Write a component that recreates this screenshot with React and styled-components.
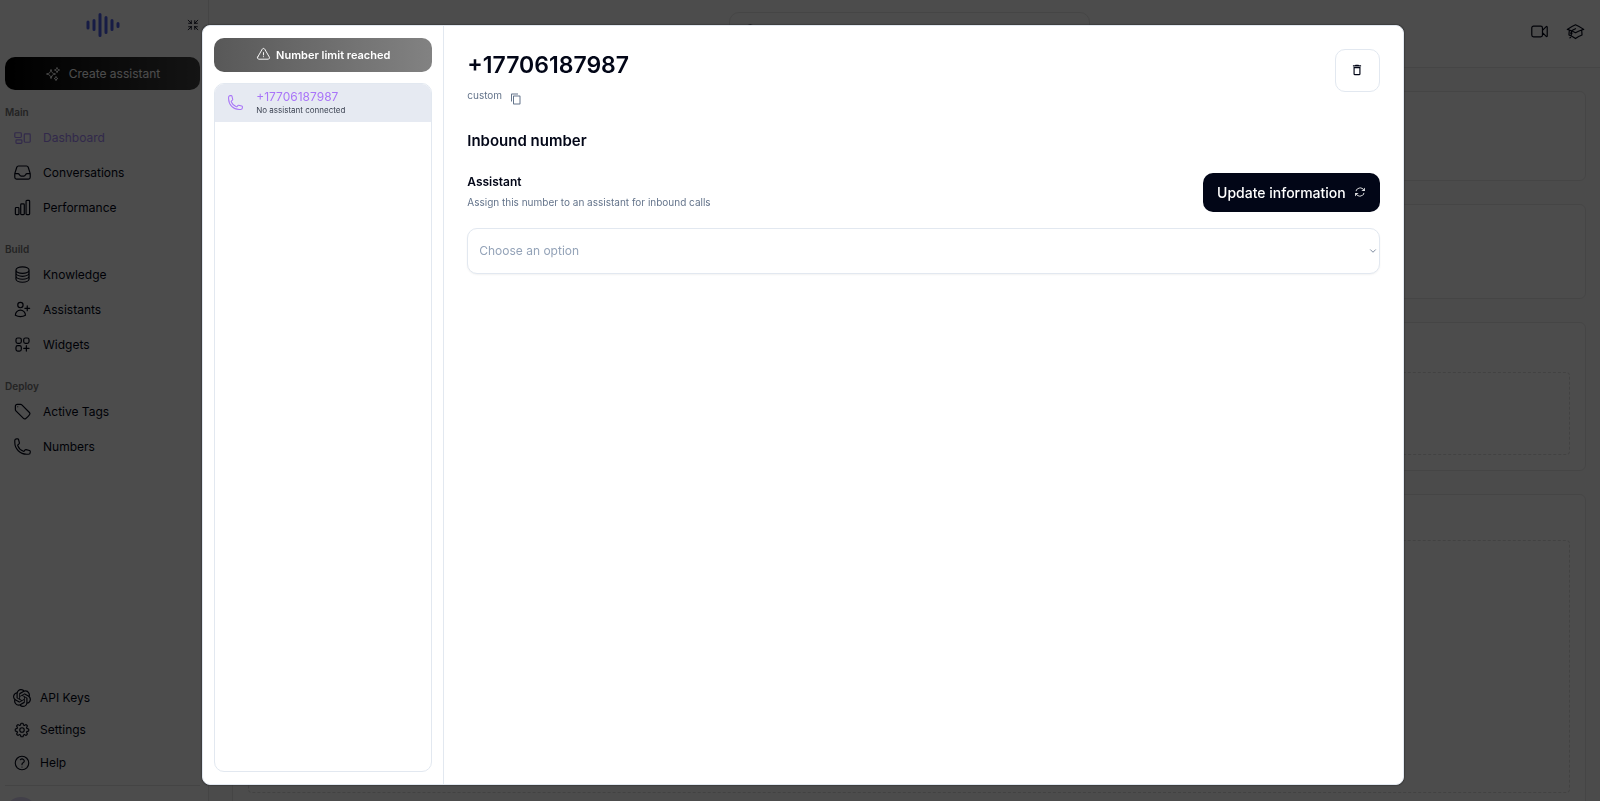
import styled, { createGlobalStyle } from "styled-components";
import {
    HiArrowPath,
    HiOutlineAcademicCap,
    HiOutlineArrowsPointingIn,
    HiOutlineChartBar,
    HiOutlineCircleStack,
    HiOutlineCog8Tooth,
    HiOutlineExclamationTriangle,
    HiOutlineInbox,
    HiOutlinePhone,
    HiOutlineQuestionMarkCircle,
    HiOutlineRectangleGroup,
    HiOutlineSparkles,
    HiOutlineSquaresPlus,
    HiOutlineTag,
    HiOutlineUserPlus,
    HiOutlineVideoCamera,
} from "react-icons/hi2";
import { MdContentCopy, MdDeleteOutline } from "react-icons/md";
import { SiOpenai } from "react-icons/si";
import { LuChevronDown, LuSearch } from "react-icons/lu";

const GlobalStyle = createGlobalStyle`
    * {
        box-sizing: border-box;
    }
    body {
        margin: 0;
        font-family: Inter, "Liberation Sans", sans-serif;
        font-size: 12px;
        line-height: 16px;
        color: #020617;
        background: #fafafa;
    }
    h2, h3, p {
        margin: 0;
    }
    button, input, select {
        font-family: inherit;
        margin: 0;
    }
    svg {
        display: block;
        flex-shrink: 0;
    }
`;
const Page = styled.div`
    display: flex;
    height: 100vh;
    overflow: hidden;
`;
const Sidebar = styled.aside`
    display: flex;
    flex-direction: column;
    flex-shrink: 0;
    width: 209px;
    padding: 0 8px 0 5px;
    border-right: 1px solid #e8e8e8;
    background: #fdfdfd;
`;
const SidebarTop = styled.div`
    display: grid;
    grid-template-columns: 1fr auto 1fr;
    align-items: center;
    height: 49px;
    margin-bottom: 8px;
`;
const CollapseButton = styled.button`
    grid-column: 3;
    justify-self: end;
    padding: 0;
    border: 0;
    background: none;
    color: #020617;
`;
const CreateButton = styled.button`
    display: flex;
    align-items: center;
    justify-content: center;
    gap: 8px;
    flex-shrink: 0;
    height: 33px;
    margin-bottom: 14px;
    border: 0;
    border-radius: 10px;
    background: linear-gradient(90deg, #000, #444);
    color: #fff;
    font-size: 12px;
    font-weight: 400;
`;
const NavSection = styled.section`
    display: flex;
    flex-direction: column;
    margin-bottom: 16px;
`;
const NavLabel = styled.p`
    font-size: 10px;
    font-weight: 600;
    color: #777;
`;
const NavLink = styled.a`
    display: flex;
    align-items: center;
    gap: ${({ $compact }) => ($compact ? "9px" : "11px")};
    height: ${({ $compact }) => ($compact ? "33px" : "35px")};
    padding-left: 8px;
    font-size: 12px;
    font-weight: 400;
    color: ${({ $active }) => ($active ? "#a78bfa" : "#020617")};
    text-decoration: none;
`;
const SidebarBottom = styled.div`
    display: flex;
    flex-direction: column;
    height: 119px;
    margin-top: auto;
`;
const Account = styled.div`
    flex-shrink: 0;
    height: 16px;
    margin-top: 6px;
    padding-top: 11px;
    border-top: 1px solid #e5e5e5;
    overflow: hidden;
`;
const Avatar = styled.div`
    width: 32px;
    height: 32px;
    border-radius: 50%;
    background: #ddd6f3;
`;
const Main = styled.main`
    flex: 1;
    min-width: 0;
    overflow: hidden;
`;
const Header = styled.header`
    display: grid;
    grid-template-columns: 1fr 361px 1fr;
    align-items: center;
    height: 68px;
    padding: 0 15px 4px 24px;
    border-bottom: 1px solid #e8e8e8;
    background: #fdfdfd;
`;
const Search = styled.label`
    display: flex;
    align-items: center;
    gap: 8px;
    height: 40px;
    padding: 0 12px;
    border: 1px solid #e8e8e8;
    border-radius: 10px;
`;
const SearchInput = styled.input`
    flex: 1;
    min-width: 0;
    border: 0;
    outline: 0;
    background: none;
`;
const HeaderActions = styled.nav`
    display: flex;
    justify-content: flex-end;
    gap: 17px;
`;
const HeaderLink = styled.a`
    color: #020617;
`;
const Cards = styled.div`
    display: flex;
    flex-direction: column;
    gap: 23px;
    padding: 23px 14px 0 23px;
`;
const Card = styled.section`
    display: flex;
    flex-direction: column;
    justify-content: flex-end;
    height: ${({ $height }) => $height}px;
    padding: 15px;
    border: 1px solid #e8e8e8;
    border-radius: 6px;
    background: #fdfdfd;
`;
const EmptyArea = styled.div`
    height: ${({ $height }) => $height}px;
    border: 1px dashed #dedede;
    border-radius: 4px;
`;
const Overlay = styled.div`
    position: fixed;
    inset: 0;
    display: flex;
    align-items: center;
    justify-content: center;
    padding: 9px 0 0 6px;
    background: rgba(0, 0, 0, 0.7);
`;
const Dialog = styled.div`
    display: flex;
    width: calc(75% + 6px);
    height: 96%;
    border: 1px solid #e2e8f0;
    border-radius: 8px;
    background: #fff;
    box-shadow: 0 0 2px rgba(0, 0, 0, 0.7);
`;
const NumbersPanel = styled.div`
    display: flex;
    flex-direction: column;
    gap: 11px;
    flex-shrink: 0;
    width: 241px;
    padding: 12px 11px;
    border-right: 1px solid #e2e8f0;
`;
const LimitButton = styled.button`
    display: flex;
    align-items: center;
    justify-content: center;
    gap: 5px;
    flex-shrink: 0;
    height: 34px;
    border: 0;
    border-radius: 10px;
    background: linear-gradient(90deg, #585858, #828282);
    color: #fff;
    font-size: 11px;
    font-weight: 600;
`;
const NumberList = styled.div`
    flex: 1;
    border: 1px solid #e2e8f0;
    border-radius: 10px;
    overflow: hidden;
`;
const NumberItem = styled.a`
    display: flex;
    align-items: center;
    gap: 12px;
    height: 38px;
    padding-left: 12px;
    background: #e6eaf2;
    color: #a975f8;
    text-decoration: none;
`;
const NumberText = styled.div`
    display: flex;
    flex-direction: column;
    font-size: 12px;
    line-height: 15px;
`;
const NumberStatus = styled.span`
    font-size: 8px;
    line-height: 12px;
    color: #3d4453;
`;
const Detail = styled.div`
    flex: 1;
    min-width: 0;
    padding: 23px;
`;
const DetailHeader = styled.div`
    display: flex;
    justify-content: space-between;
    align-items: flex-start;
    height: 80px;
`;
const Title = styled.h2`
    font-size: 23px;
    line-height: 32px;
    font-weight: 600;
`;
const Provider = styled.div`
    display: flex;
    align-items: flex-start;
    gap: 8px;
    margin-top: 6px;
    font-size: 10px;
    color: #64748b;
`;
const CopyButton = styled.button`
    padding: 6px 0 0;
    border: 0;
    background: none;
    color: #64748b;
`;
const DeleteButton = styled.button`
    display: flex;
    align-items: center;
    justify-content: center;
    width: 45px;
    height: 43px;
    border: 1px solid #e2e8f0;
    border-radius: 10px;
    background: #fff;
    color: #020617;
`;
const SectionTitle = styled.h3`
    font-size: 15px;
    line-height: 24px;
    font-weight: 600;
`;
const AssistantRow = styled.div`
    display: flex;
    align-items: center;
    justify-content: space-between;
    margin: 20px 0 16px;
`;
const FieldLabel = styled.label`
    display: block;
    margin-bottom: 4px;
    font-size: 12px;
    font-weight: 600;
`;
const Hint = styled.p`
    font-size: 10px;
    color: #64748b;
`;
const UpdateButton = styled.button`
    display: flex;
    align-items: center;
    gap: 8px;
    height: 39px;
    padding: 0 14px;
    border: 0;
    border-radius: 10px;
    background: #020617;
    color: #fff;
    font-size: 14px;
    font-weight: 500;
`;
const SelectBox = styled.div`
    position: relative;
`;
const Select = styled.select`
    appearance: none;
    width: 100%;
    height: 46px;
    padding: 0 11px;
    border: 1px solid #e2e8f0;
    border-radius: 10px;
    background: #fff;
    color: #94a3b8;
    font-size: 12px;
    box-shadow: 0 1px 2px rgba(0, 0, 0, 0.05);
`;
const Chevron = styled(LuChevronDown)`
    position: absolute;
    top: 50%;
    right: 2px;
    margin-top: -5px;
    color: #64748b;
    pointer-events: none;
`;

const SECTIONS = [
    {
        label: "Main",
        items: [
            { name: "Dashboard", Icon: HiOutlineRectangleGroup, active: true },
            { name: "Conversations", Icon: HiOutlineInbox },
            { name: "Performance", Icon: HiOutlineChartBar },
        ],
    },
    {
        label: "Build",
        items: [
            { name: "Knowledge", Icon: HiOutlineCircleStack },
            { name: "Assistants", Icon: HiOutlineUserPlus },
            { name: "Widgets", Icon: HiOutlineSquaresPlus },
        ],
    },
    {
        label: "Deploy",
        items: [
            { name: "Active Tags", Icon: HiOutlineTag },
            { name: "Numbers", Icon: HiOutlinePhone },
        ],
    },
];
const BOTTOM_ITEMS = [
    { name: "API Keys", Icon: SiOpenai },
    { name: "Settings", Icon: HiOutlineCog8Tooth },
    { name: "Help", Icon: HiOutlineQuestionMarkCircle },
];
const PHONE_NUMBER = "+17706187987";

function Logo() {
    return (
        <svg width="36" height="26" viewBox="0 0 36 26" fill="none" stroke="#4f5fe8" strokeWidth="3" strokeLinecap="round">
            <path d="M3 10v6M9 8.5v9M15 2.5v21M21 5.5v15M27 8.5v9M33 11.5v3" />
        </svg>
    );
}

function AppSidebar() {
    return (
        <Sidebar>
            <SidebarTop>
                <span />
                <Logo />
                <CollapseButton aria-label="Collapse sidebar"><HiOutlineArrowsPointingIn size={14} /></CollapseButton>
            </SidebarTop>
            <CreateButton><HiOutlineSparkles size={16} />Create assistant</CreateButton>
            {SECTIONS.map(({ label, items }) => (
                <NavSection key={label}>
                    <NavLabel>{label}</NavLabel>
                    {items.map(({ name, Icon, active }) => (
                        <NavLink key={name} href="#" $active={active}><Icon size={19} />{name}</NavLink>
                    ))}
                </NavSection>
            ))}
            <SidebarBottom>
                {BOTTOM_ITEMS.map(({ name, Icon }) => (
                    <NavLink key={name} href="#" $compact><Icon size={18} />{name}</NavLink>
                ))}
                <Account><Avatar /></Account>
            </SidebarBottom>
        </Sidebar>
    );
}

function Dashboard() {
    return (
        <Main>
            <Header>
                <span />
                <Search>
                    <LuSearch size={18} />
                    <SearchInput type="search" aria-label="Search" />
                </Search>
                <HeaderActions>
                    <HeaderLink href="#" aria-label="Videos"><HiOutlineVideoCamera size={19} /></HeaderLink>
                    <HeaderLink href="#" aria-label="Academy"><HiOutlineAcademicCap size={19} /></HeaderLink>
                </HeaderActions>
            </Header>
            <Cards>
                <Card $height={90} />
                <Card $height={95} />
                <Card $height={149}><EmptyArea $height={83} /></Card>
                <Card $height={315}><EmptyArea $height={253} /></Card>
            </Cards>
        </Main>
    );
}

function NumbersDialog() {
    return (
        <Overlay>
            <Dialog role="dialog" aria-label="Numbers">
                <NumbersPanel>
                    <LimitButton><HiOutlineExclamationTriangle size={15} />Number limit reached</LimitButton>
                    <NumberList>
                        <NumberItem href="#">
                            <HiOutlinePhone size={17} />
                            <NumberText>
                                {PHONE_NUMBER}
                                <NumberStatus>No assistant connected</NumberStatus>
                            </NumberText>
                        </NumberItem>
                    </NumberList>
                </NumbersPanel>
                <Detail>
                    <DetailHeader>
                        <div>
                            <Title>{PHONE_NUMBER}</Title>
                            <Provider>
                                custom
                                <CopyButton aria-label="Copy number"><MdContentCopy size={12} /></CopyButton>
                            </Provider>
                        </div>
                        <DeleteButton aria-label="Delete number"><MdDeleteOutline size={14} /></DeleteButton>
                    </DetailHeader>
                    <SectionTitle>Inbound number</SectionTitle>
                    <AssistantRow>
                        <div>
                            <FieldLabel htmlFor="assistant">Assistant</FieldLabel>
                            <Hint>Assign this number to an assistant for inbound calls</Hint>
                        </div>
                        <UpdateButton>Update information<HiArrowPath size={12} /></UpdateButton>
                    </AssistantRow>
                    <SelectBox>
                        <Select id="assistant">
                            <option>Choose an option</option>
                        </Select>
                        <Chevron size={10} />
                    </SelectBox>
                </Detail>
            </Dialog>
        </Overlay>
    );
}

export default function App() {
    return (
        <>
            <GlobalStyle />
            <Page>
                <AppSidebar />
                <Dashboard />
            </Page>
            <NumbersDialog />
        </>
    );
}
